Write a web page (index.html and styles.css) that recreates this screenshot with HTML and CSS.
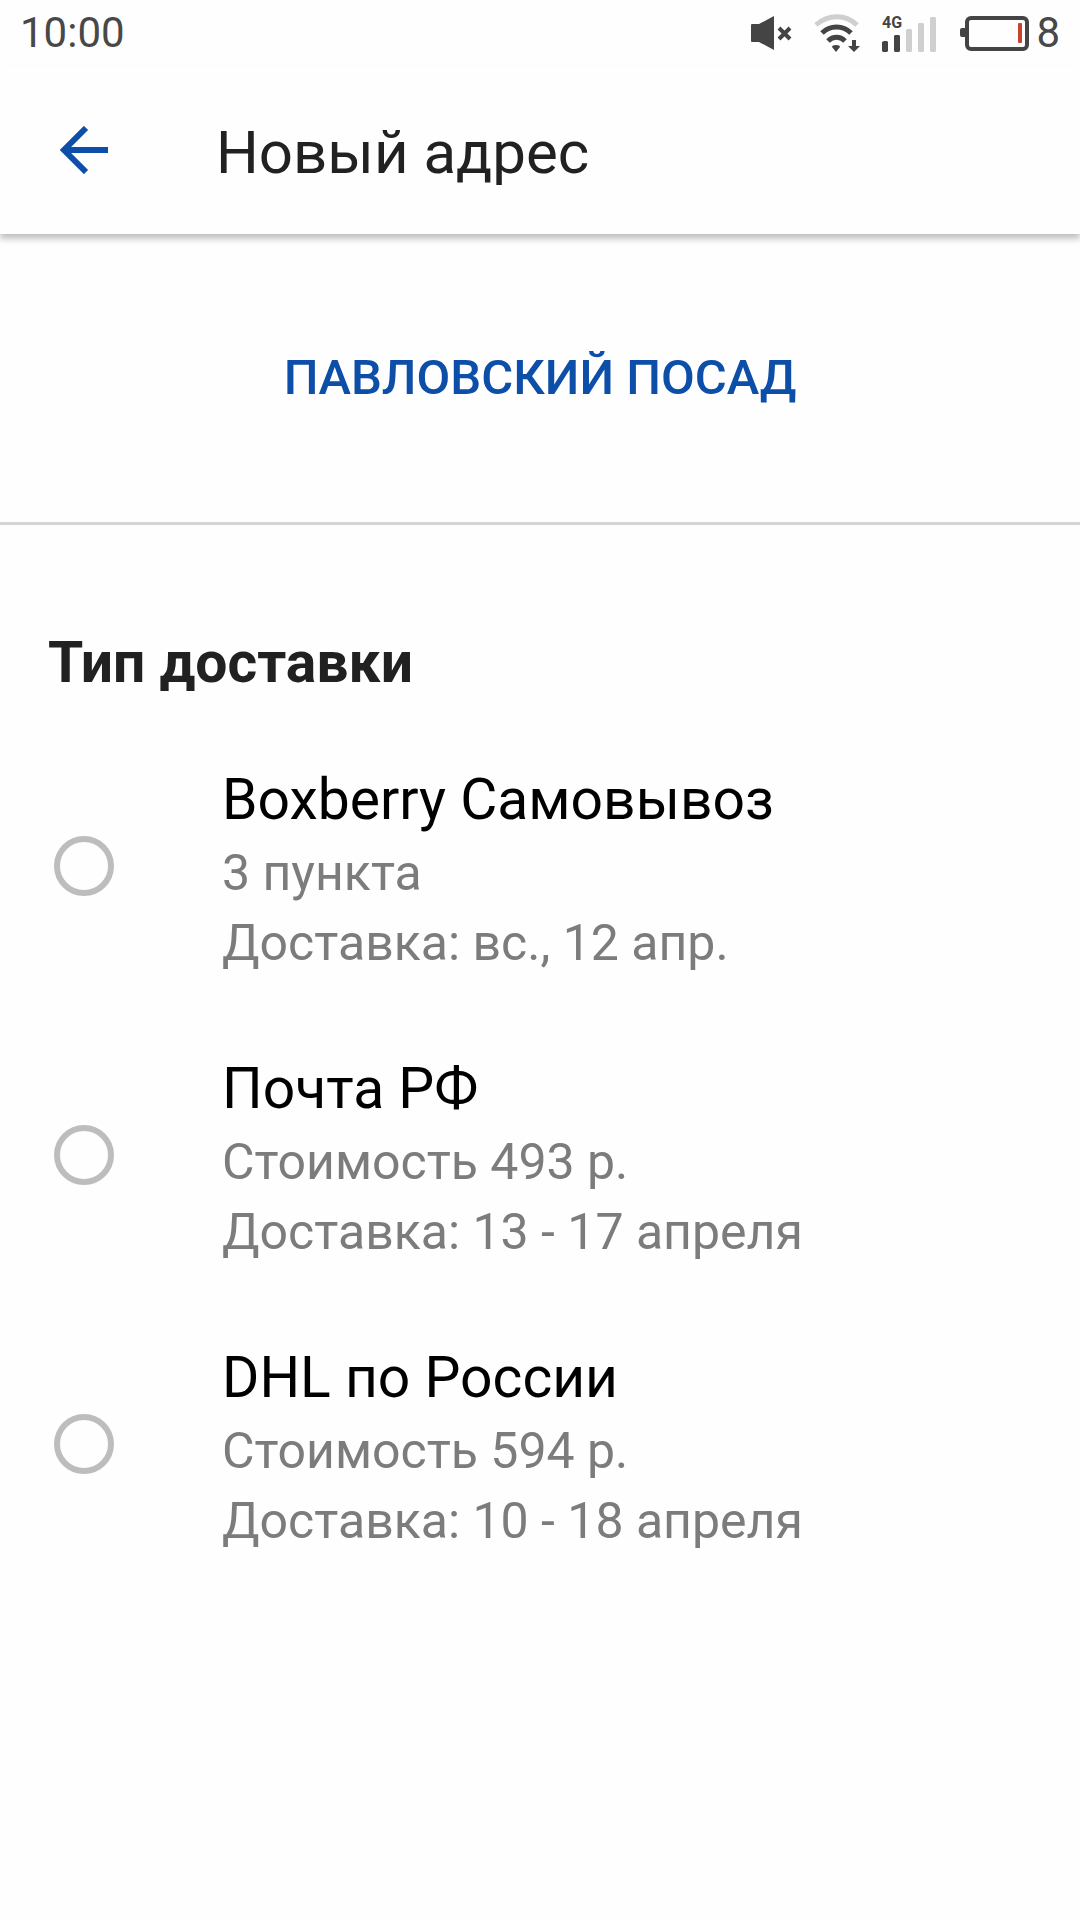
FILE: index.html
```html
<!DOCTYPE html>
<html lang="ru">
<head>
<meta charset="utf-8">
<meta name="viewport" content="width=device-width, initial-scale=1">
<title>Новый адрес</title>
<link rel="stylesheet" href="styles.css">
</head>
<body>
<div class="status-bar">
  <span class="status-text">10:00</span>
  <div class="status-icons">
    <svg width="42" height="36" viewBox="0 0 42 36" aria-label="Без звука">
      <path class="ink" d="M2 9h7L24 1v34L9 27H2a1 1 0 0 1-1-1V10a1 1 0 0 1 1-1z"/>
      <path class="ink-line" stroke-width="4" d="M29 13l11 11M40 13L29 24"/>
    </svg>
    <svg width="46" height="40" viewBox="0 0 46 40" aria-label="Wi-Fi">
      <path class="faint-line" stroke-width="5" d="M2 12C14 1 32 1 43 12"/>
      <path class="ink-line" stroke-width="5" d="M8 20C16 12 29 12 37 20M14 28C19 23 26 23 31 28"/>
      <path class="ink" d="M22 39l-4-5q0-2 4-2t4 2zM38 27h4v6h4l-6 6-6-6h4z"/>
    </svg>
    <svg width="56" height="38" viewBox="0 0 56 38" aria-label="Сигнал 4G">
      <text class="network" x="0" y="14">4G</text>
      <path class="ink" d="M2 27h3l1 1v9l-1 1H1l-1-1v-9zM13 21h4l1 1v15l-1 1h-4l-1-1V22z"/>
      <path class="faint" d="M25 15h4l1 1v21l-1 1h-4l-1-1V16zM37 9h4l1 1v27l-1 1h-4l-1-1V10zM49 3h4l1 1v33l-1 1h-4l-1-1V4z"/>
    </svg>
    <svg width="70" height="36" viewBox="0 0 70 36" aria-label="Заряд батареи">
      <path class="ink" d="M0 15q0-2 2-2h4v9H2q-2 0-2-2z"/>
      <rect class="ink-line" stroke-width="4" x="7" y="3" width="60" height="31" rx="4"/>
      <rect class="charge" x="58" y="8" width="4" height="20" rx="1"/>
    </svg>
  </div>
  <span class="status-text">8</span>
</div>
<header class="app-bar">
  <button class="back" type="button" aria-label="Назад">
    <svg width="48" height="48" viewBox="0 0 48 48">
      <path d="M26 2L4 24l22 22M4 24h44"/>
    </svg>
  </button>
  <h1 class="title">Новый адрес</h1>
</header>
<main>
  <section class="city">
    <button class="city-button" type="button">ПАВЛОВСКИЙ ПОСАД</button>
  </section>
  <form class="delivery">
    <fieldset class="options">
      <legend class="heading">Тип доставки</legend>
      <label class="option">
        <input class="radio" type="radio" name="delivery" value="boxberry">
        <span class="details">
          <span class="name">Boxberry Самовывоз</span>
          <span class="note">3 пункта</span>
          <span class="note">Доставка: вс., 12 апр.</span>
        </span>
      </label>
      <label class="option">
        <input class="radio" type="radio" name="delivery" value="post">
        <span class="details">
          <span class="name">Почта РФ</span>
          <span class="note">Стоимость 493 р.</span>
          <span class="note">Доставка: 13 - 17 апреля</span>
        </span>
      </label>
      <label class="option">
        <input class="radio" type="radio" name="delivery" value="dhl">
        <span class="details">
          <span class="name">DHL по России</span>
          <span class="note">Стоимость 594 р.</span>
          <span class="note">Доставка: 10 - 18 апреля</span>
        </span>
      </label>
    </fieldset>
  </form>
</main>
</body>
</html>
```
FILE: styles.css
```css
* {
  box-sizing: border-box;
}

body {
  margin: 0;
  min-height: 100vh;
  background: #fefefe;
  color: #212121;
  font-family: Roboto, "Noto Sans", sans-serif;
}

.status-bar {
  display: flex;
  align-items: center;
  height: 66px;
  padding: 0 20px;
}

.status-text {
  color: #484848;
  font-size: 42px;
  line-height: 66px;
}

.status-icons {
  display: flex;
  align-items: center;
  gap: 22px;
  margin-left: auto;
  margin-right: 6px;
}

.ink {
  fill: #444;
}

.ink-line {
  fill: none;
  stroke: #444;
}

.faint {
  fill: #cfcfcf;
}

.faint-line {
  fill: none;
  stroke: #cfcfcf;
}

.charge {
  fill: #c8432b;
}

.network {
  fill: #444;
  font-size: 16px;
  font-weight: 700;
}

.app-bar {
  display: flex;
  align-items: center;
  gap: 96px;
  height: 168px;
  padding: 0 48px;
  box-shadow: 0 5px 6px rgba(0, 0, 0, 0.24);
}

.back {
  display: flex;
  padding: 12px;
  border: 0;
  background: none;
}

.back path {
  fill: none;
  stroke: #0d4ea8;
  stroke-width: 6;
}

.title {
  margin: 0;
  padding-top: 5px;
  font-size: 60px;
  font-weight: 400;
  line-height: 72px;
}

.city {
  display: flex;
  justify-content: center;
  padding: 96px 48px;
  border-bottom: 3px solid #d5d5d5;
}

.city-button {
  padding: 0;
  border: 0;
  background: none;
  color: #0d4ea8;
  font: inherit;
  font-size: 49px;
  font-weight: 500;
  line-height: 96px;
}

.delivery {
  padding: 100px 48px 72px;
}

.options {
  display: flex;
  flex-direction: column;
  gap: 73px;
  margin: 0;
  padding: 0;
  border: 0;
}

.heading {
  padding: 0 0 61px;
  font-size: 57px;
  font-weight: 700;
  line-height: 76px;
}

.option {
  display: flex;
  align-items: flex-start;
  gap: 108px;
  padding-left: 6px;
}

.radio {
  flex: none;
  appearance: none;
  width: 60px;
  height: 60px;
  margin: 74px 0 0;
  border: 6px solid #bdbdbd;
  border-radius: 50%;
}

.radio:checked {
  border-color: #0d4ea8;
  background: radial-gradient(#0d4ea8 50%, transparent 52%);
}

.details {
  display: flex;
  flex-direction: column;
}

.name {
  color: #000;
  font-size: 57px;
  line-height: 76px;
}

.note {
  color: #7c7c7c;
  font-size: 50px;
  line-height: 70px;
}
```
